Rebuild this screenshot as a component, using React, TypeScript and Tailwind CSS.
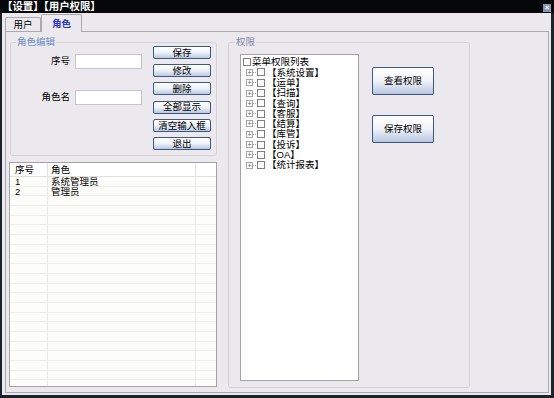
import React from 'react';

const editButtons = ['保存', '修改', '删除', '全部显示', '清空输入框', '退出'];

const roles = [
    { id: '1', name: '系统管理员' },
    { id: '2', name: '管理员' },
];

const menus = ['【系统设置】', '【运单】', '【扫描】', '【查询】', '【客服】', '【结算】', '【库管】', '【投诉】', '【OA】', '【统计报表】'];

function SmallButton({ label }: { label: string }) {
    return (
        <button className="h-[13px] w-[58px] border border-[#3e5884] rounded-[2px] bg-linear-to-b from-white via-[#eef2f8] to-[#b9c8e0] text-[9.5px] leading-none text-black flex items-center justify-center">
            {label}
        </button>
    );
}

function BigButton({ label }: { label: string }) {
    return (
        <button className="h-[28px] w-[62px] border border-[#3e5884] rounded-[2px] bg-linear-to-b from-white via-[#f0f3f8] to-[#b7c6df] text-[9.5px] leading-none text-black flex items-center justify-center">
            {label}
        </button>
    );
}

function CheckBox({ className = '' }: { className?: string }) {
    return <span className={`block w-[8px] h-[8px] border border-[#7f7f7f] bg-white shrink-0 ${className}`} />;
}

export default function App() {
    const blankRows = Array.from({ length: 22 }, (_, i) => roles[i] ?? null);

    return (
        <div className="w-[554px] h-[398px] bg-[#1c222c] flex flex-col overflow-hidden font-['Liberation_Sans','Noto_Sans_CJK_SC',sans-serif]">
            {/* 标题栏 */}
            <div className="h-[13px] bg-[#06070a] flex justify-between pl-[2px] pr-[3px] shrink-0">
                <span className="text-white text-[10.5px] font-bold leading-[13px] tracking-[-0.1px]">【设置】【用户权限】</span>
                <span className="self-end mb-[1px] w-[8px] h-[8px] bg-[#8797ad] text-white text-[8px] leading-[8px] text-center font-bold">×</span>
            </div>

            <div className="flex-1 ml-[2px] mr-[3px] mb-[3px] bg-[#ebe9ed] flex flex-col text-[9.5px] text-black">
                {/* 标签页 */}
                <div className="h-[18px] pl-[3px] flex items-end shrink-0">
                    <div className="h-[14px] w-[36px] border border-b-0 border-[#a9a8ad] rounded-t-[2px] flex items-center justify-center leading-none">
                        用户
                    </div>
                    <div className="relative z-10 -mb-px h-[18px] w-[41px] border border-b-0 border-[#a9a8ad] rounded-t-[2px] bg-[#ebe9ed] flex items-center justify-center leading-none text-[#2a36c4] font-bold">
                        角色
                    </div>
                </div>

                <div className="flex-1 ml-[3px] mr-[2px] mb-[2px] border border-[#a9a8ad] pl-[3px] pt-[6px] flex">
                    {/* 左侧 */}
                    <div className="w-[208px] flex flex-col">
                        <fieldset className="ml-[1px] w-[207px] border border-[#d3d1d7] rounded-[3px]">
                            <legend className="ml-[5px] px-[1px] leading-[8px] text-[#6f8cc6]">角色编辑</legend>
                            <div className="flex pr-[5px] pb-[5px]">
                                <div className="w-[142px] flex flex-col">
                                    <div className="mt-[8px] flex items-center gap-[5px]">
                                        <span className="w-[59px] text-right">序号</span>
                                        <input className="w-[67px] h-[15px] bg-white border border-[#c6c5ca] outline-none" />
                                    </div>
                                    <div className="mt-[21px] flex items-center gap-[5px]">
                                        <span className="w-[59px] text-right">角色名</span>
                                        <input className="w-[67px] h-[15px] bg-white border border-[#c6c5ca] outline-none" />
                                    </div>
                                </div>
                                <div className="flex flex-col gap-[5.2px]">
                                    {editButtons.map(b => (
                                        <SmallButton key={b} label={b} />
                                    ))}
                                </div>
                            </div>
                        </fieldset>

                        {/* 角色列表 */}
                        <div className="mt-[6px] h-[225px] w-[208px] border border-[#a3a3a6] bg-[#fdfdfa] overflow-hidden">
                            <div className="h-[14px] flex border-b border-[#e2e0da] bg-white leading-[14px]">
                                <div className="w-[38px] pl-[5px] border-r border-[#e4e2dc]">序号</div>
                                <div className="w-[148px] pl-[3px] border-r border-[#e4e2dc]">角色</div>
                                <div className="flex-1" />
                            </div>
                            {blankRows.map((r, i) => (
                                <div key={i} className="h-[9.7px] flex border-b border-[#efeee8] leading-[9px]">
                                    <div className="w-[38px] pl-[5px] border-r border-[#ebe9e3]">{r?.id}</div>
                                    <div className="w-[148px] pl-[3px] border-r border-[#ebe9e3]">{r?.name}</div>
                                    <div className="flex-1" />
                                </div>
                            ))}
                        </div>
                    </div>

                    {/* 权限 */}
                    <fieldset className="ml-[11px] w-[242px] h-[350px] border border-[#d3d1d7] rounded-[3px]">
                        <legend className="ml-[6px] px-[1px] leading-[8px] text-[#7d85a6]">权限</legend>
                        <div className="flex">
                            <div className="ml-[11px] mt-[8px] w-[119px] h-[327px] bg-white border border-[#a3a3a6] pt-[2px]">
                                <div className="h-[10.3px] flex items-center">
                                    <CheckBox className="ml-[2px]" />
                                    <span className="ml-[1px] leading-none">菜单权限列表</span>
                                </div>
                                {menus.map(m => (
                                    <div key={m} className="h-[10.3px] flex items-center">
                                        <span className="ml-[5px] w-[7px] h-[7px] border border-[#a6a6a6] text-[#555] text-[7px] leading-[5px] text-center shrink-0">+</span>
                                        <span className="w-[3px] border-t border-dotted border-[#a0a0a0]" />
                                        <CheckBox className="ml-[1px]" />
                                        <span className="ml-[2px] leading-none">{m}</span>
                                    </div>
                                ))}
                            </div>
                            <div className="ml-[13px] mt-[21px] flex flex-col gap-[20px]">
                                <BigButton label="查看权限" />
                                <BigButton label="保存权限" />
                            </div>
                        </div>
                    </fieldset>
                </div>
            </div>
        </div>
    );
}
